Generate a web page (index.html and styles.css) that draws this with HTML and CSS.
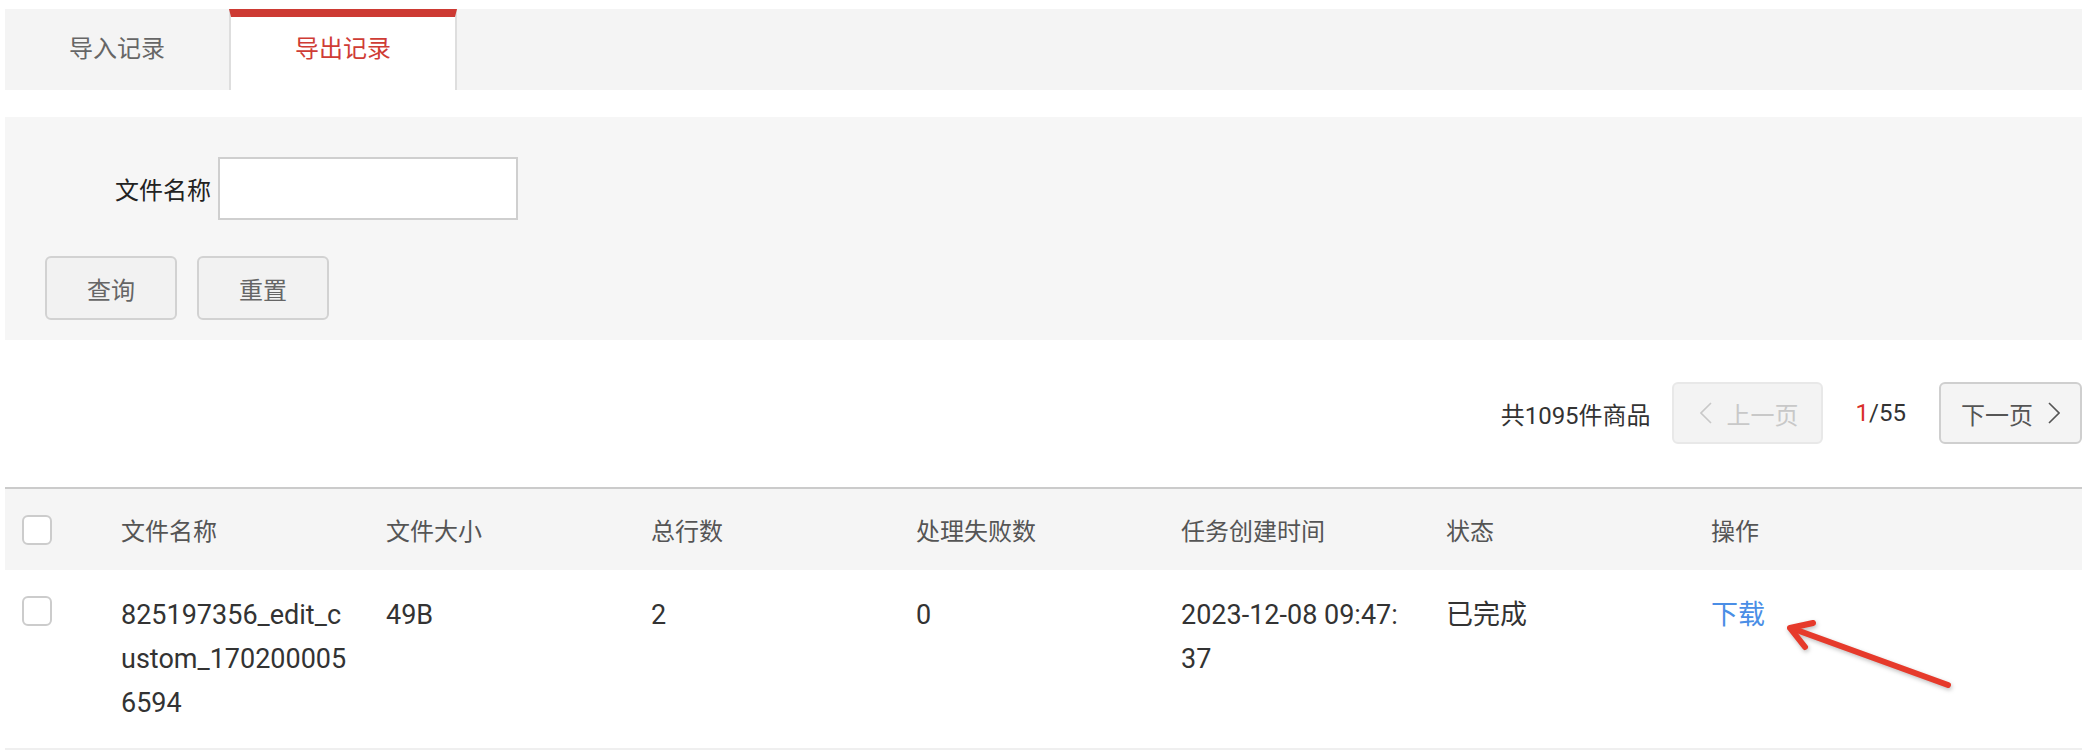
FILE: index.html
```html
<!DOCTYPE html>
<html lang="zh-CN">
<head>
  <meta charset="UTF-8" />
  <meta name="viewport" content="width=device-width, initial-scale=1.0"/>
  <title>导出记录</title>
  <link rel="stylesheet" href="styles.css">
</head>
<body>
  <div class="page">
    <div class="tabs">
      <a class="tab">导入记录</a>
      <a class="tab active">导出记录</a>
    </div>

    <form class="search-panel">
      <div class="field-row">
        <label for="file-name">文件名称</label>
        <input type="text" id="file-name" />
      </div>
      <div class="btn-row">
        <button type="button" class="btn">查询</button>
        <button type="reset" class="btn">重置</button>
      </div>
    </form>

    <div class="pager">
      <span class="total">共1095件商品</span>
      <button type="button" class="page-btn disabled">
        <svg class="chev" viewBox="0 0 12 22"><polyline points="11,1 1,11 11,21" /></svg>
        上一页
      </button>
      <span class="page-num"><em>1</em>/55</span>
      <button type="button" class="page-btn next">
        下一页
        <svg class="chev" viewBox="0 0 12 22"><polyline points="1,1 11,11 1,21" /></svg>
      </button>
    </div>

    <table class="records">
      <colgroup>
        <col class="col-check">
        <col class="col-data"><col class="col-data"><col class="col-data">
        <col class="col-data"><col class="col-data"><col class="col-data">
        <col>
      </colgroup>
      <thead>
        <tr>
          <th><span class="check"></span></th>
          <th>文件名称</th>
          <th>文件大小</th>
          <th>总行数</th>
          <th>处理失败数</th>
          <th>任务创建时间</th>
          <th>状态</th>
          <th>操作</th>
        </tr>
      </thead>
      <tbody>
        <tr>
          <td><span class="check"></span></td>
          <td>825197356_edit_custom_1702000056594</td>
          <td>49B</td>
          <td>2</td>
          <td>0</td>
          <td>2023-12-08 09:47:37</td>
          <td>已完成</td>
          <td><a class="link" href="#">下载</a></td>
        </tr>
      </tbody>
    </table>

    <!-- annotation arrow pointing at the download link -->
    <svg class="annot-arrow" viewBox="0 0 180 90" width="180" height="90">
      <g fill="none" stroke="#e63a2b" stroke-width="6" stroke-linecap="round" stroke-linejoin="round">
        <line x1="168" y1="75" x2="11" y2="18" />
        <polyline points="33,13 10,18 25,37" />
      </g>
    </svg>
  </div>
</body>
</html>
```

FILE: styles.css
```css
body {
  margin: 0;
  background: #fff;
  font-family: Roboto, "Noto Sans CJK SC", sans-serif;
  color: #333;
}
.page {
  position: relative;
  padding: 9px 0 0 5px;
}

/* tabs */
.tabs {
  display: flex;
  height: 81px;
  background: #f4f4f4;
}
.tab {
  width: 224px;
  line-height: 81px;
  text-align: center;
  font-size: 24px;
  color: #666;
  cursor: pointer;
}
.tab.active {
  width: 224px;
  line-height: 65px;
  padding-bottom: 8px;
  background: #fff;
  border-top: 8px solid #cd3a33;
  border-left: 2px solid #dedede;
  border-right: 2px solid #dedede;
  color: #cf3c35;
}

/* search */
.search-panel {
  margin: 27px 0 0;
  padding: 40px 0 20px;
  background: #f6f6f6;
}
.field-row {
  display: flex;
  align-items: center;
  gap: 7px;
  padding-left: 110px;
  height: 63px;
}
.field-row label {
  font-size: 24px;
  color: #222;
}
.field-row input {
  width: 300px;
  height: 63px;
  box-sizing: border-box;
  border: 2px solid #cfcfcf;
  background: #fff;
  font-size: 22px;
  padding: 0 10px;
}
.btn-row {
  display: flex;
  gap: 20px;
  margin-top: 36px;
  padding-left: 40px;
}
.btn {
  width: 132px;
  height: 64px;
  background: #f2f2f2;
  border: 2px solid #d2d2d2;
  border-radius: 6px;
  font-family: inherit;
  font-size: 24px;
  color: #666;
  cursor: pointer;
}

/* pager */
.pager {
  display: flex;
  justify-content: flex-end;
  align-items: center;
  margin-top: 42px;
  height: 62px;
  font-size: 24px;
}
.total {
  margin-right: 21px;
}
.page-btn {
  display: flex;
  align-items: center;
  gap: 15px;
  height: 62px;
  padding: 0 22px 0 26px;
  box-sizing: border-box;
  background: #f4f4f4;
  border: 2px solid #cfcfcf;
  border-radius: 6px;
  font-family: inherit;
  font-size: 24px;
  color: #555;
  cursor: pointer;
}
.page-btn.next {
  padding: 0 20px 0 20px;
}
.page-btn.disabled {
  background: #f3f3f3;
  border-color: #e8e8e8;
  color: #c8c8c8;
  cursor: default;
}
.chev {
  width: 12px;
  height: 22px;
}
.chev polyline {
  fill: none;
  stroke: currentColor;
  stroke-width: 1.6;
}
.page-num {
  margin: 0 33px;
}
.page-num em {
  font-style: normal;
  color: #d9302a;
}

/* table */
.records {
  width: 100%;
  margin-top: 43px;
  border-collapse: collapse;
  table-layout: fixed;
  border-top: 2px solid #cbcbcb;
}
.col-check {
  width: 116px;
}
.col-data {
  width: 265px;
}
.records th {
  height: 81px;
  padding: 0 37px 0 0;
  background: #f5f5f5;
  font-weight: normal;
  font-size: 24px;
  color: #555;
  text-align: left;
}
.records td {
  padding: 23px 37px 23px 0;
  font-size: 27px;
  line-height: 44px;
  vertical-align: top;
  word-break: break-all;
  border-bottom: 2px solid #efefef;
}
.records th:first-child,
.records td:first-child {
  padding-left: 17px;
  padding-right: 0;
}
.check {
  display: block;
  width: 30px;
  height: 30px;
  box-sizing: border-box;
  border: 2px solid #cccccc;
  border-radius: 6px;
  background: #fff;
}
.records td .check {
  margin-top: 3px;
}
.link {
  color: #4a8ee6;
  text-decoration: none;
}

.annot-arrow {
  position: absolute;
  left: 1780px;
  top: 610px;
  filter: drop-shadow(1px 2px 2px rgba(0,0,0,0.25));
}
```
